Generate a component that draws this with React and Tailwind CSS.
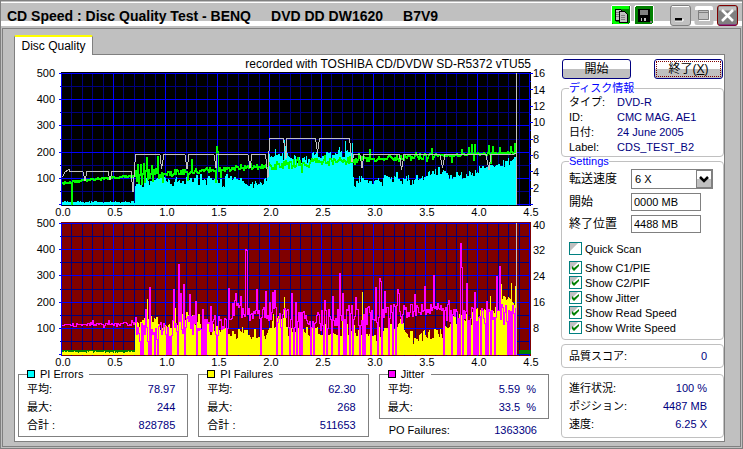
import { useId, useState } from 'react';

const PLOT_LEFT = 44;
const PLOT_TOP = 2;
const PLOT_W = 469;
const PLOT_H = 133;
const SCAN_COLS = 455;

const toX = (gb) => PLOT_LEFT + Math.round(gb * 104);
const toY = (value) => Math.round(134 - value * 0.262);

// small seeded generator so that the scan looks the same on every render
function makeRandom(seed) {
  let s = seed;
  return () => {
    s = (s * 1664525 + 1013904223) % 4294967296;
    return s / 4294967296;
  };
}

function levelAt(points, gb) {
  for (let i = 1; i < points.length; i++) {
    const [x0, y0] = points[i - 1];
    const [x1, y1] = points[i];
    if (gb <= x1) return y0 + ((gb - x0) / (x1 - x0)) * (y1 - y0);
  }
  return points[points.length - 1][1];
}

const pieLevels = [
  [0, 8], [0.699, 8], [0.7, 80], [0.8, 82], [0.95, 104], [1.03, 78], [1.12, 90], [1.3, 97],
  [1.5, 86], [1.65, 90], [1.8, 74], [1.97, 90], [1.98, 184], [2.08, 196], [2.25, 174], [2.4, 176],
  [2.5, 190], [2.65, 188], [2.79, 208], [2.8, 92], [2.87, 84], [3.2, 100], [3.35, 86], [3.45, 102],
  [3.6, 120], [3.75, 110], [3.95, 118], [4.05, 145], [4.15, 132], [4.25, 158], [4.37, 178],
];
const pieSpikes = [[2.05, 210], [2.13, 244], [2.14, 222], [2.65, 206], [2.72, 240], [2.79, 232], [2.66, 216]];

const pifLevels = [
  [0, 5], [0.699, 5], [0.7, 134], [0.76, 122], [0.82, 118], [0.88, 130], [1, 108], [1.1, 138],
  [1.2, 142], [1.3, 120], [1.4, 106], [1.5, 94], [1.6, 78], [1.7, 84], [1.8, 68], [1.95, 76],
  [2, 108], [2.08, 138], [2.15, 102], [2.25, 85], [2.4, 82], [2.5, 92], [2.7, 88], [2.85, 92],
  [3, 78], [3.15, 96], [3.25, 125], [3.3, 84], [3.4, 68], [3.5, 78], [3.65, 88], [3.75, 120],
  [3.83, 145], [3.9, 114], [4.05, 165], [4.1, 142], [4.2, 175], [4.25, 216], [4.3, 196], [4.37, 215],
];
const pifSpikes = [[0.82, 210], [1.09, 175], [1.22, 190], [2.13, 218], [2.88, 238], [4.12, 220], [4.22, 268], [4.32, 270], [4.36, 258]];

const jitterLevels = [
  [0, 112], [0.7, 117], [0.71, 80], [1, 95], [1.2, 115], [1.5, 110], [1.6, 140], [1.65, 175],
  [1.75, 150], [1.9, 155], [2, 165], [2.1, 140], [2.4, 120], [2.6, 140], [2.75, 160], [2.9, 140],
  [3.05, 160], [3.2, 150], [3.35, 168], [3.6, 174], [3.7, 155], [3.9, 145], [4.1, 155], [4.37, 150],
];
const jitterSpikes = [
  [0.8, 170], [0.84, 255], [1.07, 250], [1.115, 345], [1.13, 232], [1.165, 267], [1.22, 228],
  [1.28, 204], [1.35, 170], [1.42, 185], [1.6, 252], [1.66, 232], [1.71, 222], [1.76, 402], [1.77, 396],
  [1.87, 248], [1.95, 242], [2.02, 236], [2.04, 244], [2.2, 232], [2.24, 200], [2.52, 205],
  [2.6, 220], [2.66, 310], [2.69, 232], [2.82, 218], [3.01, 255], [3.045, 290], [3.055, 280],
  [3.1, 240], [3.22, 248], [3.23, 234], [3.38, 228], [3.48, 260], [3.57, 302], [3.71, 205],
  [3.83, 424], [3.84, 332], [3.88, 272], [3.96, 236], [4.17, 298], [4.2, 336], [4.08, 204],
];

const readLevels = [
  [0, 84], [0.25, 96], [0.7, 111], [1, 120], [1.5, 136], [2, 150], [2.5, 165], [2.8, 172],
  [3.2, 178], [3.6, 188], [4.37, 199],
];
const readSpikes = [
  [0.09, 4], [0.75, 152], [0.78, 158], [0.81, 180], [0.86, 150], [0.91, 182], [0.73, 84], [0.76, 80],
  [0.96, 88], [1.2, 96], [1.24, 170], [1.48, 222], [1.49, 204], [1.475, 88], [1.52, 108], [2.3, 126], [2.85, 195],
  [2.95, 210], [3.55, 214], [3.74, 166], [3.84, 210], [3.9, 218], [3.93, 229], [3.96, 230],
  [3.95, 170], [4.1, 225], [4.13, 222], [4.2, 218], [4.31, 222], [4.35, 232], [4.12, 162],
];

function applySpikes(values, spikes) {
  spikes.forEach(([gb, value]) => {
    values[Math.round(gb * 104)] = value;
  });
  return values;
}

function barPath(values) {
  return values.map((v, i) => `M${PLOT_LEFT + i} 135V${Math.min(toY(v), 134)}h1V135z`).join('');
}

// every column is one vertical run from the last value to this one
function tracePath(values, thickness) {
  return values
    .map((v, i) => {
      const a = toY(i ? values[i - 1] : v);
      const b = toY(v);
      return `M${PLOT_LEFT + i} ${Math.min(a, b)}h1v${Math.min(Math.abs(a - b) + thickness, 135 - Math.min(a, b))}h-1z`;
    })
    .join('');
}

function buildBars(levels, spikes, seed, noise) {
  const rnd = makeRandom(seed);
  let held = 0;
  const values = Array.from({ length: SCAN_COLS }, (_, i) => {
    const gb = i / 104;
    if (i % 2 === 0 || rnd() > 0.7) held = (rnd() + rnd() - 1) * noise;
    return gb < 0.7 ? 5 + rnd() * 6 : levelAt(levels, gb) + held;
  });
  return applySpikes(values, spikes);
}

function buildJitter() {
  const rnd = makeRandom(77);
  let down = false;
  const values = Array.from({ length: SCAN_COLS }, (_, i) => {
    const gb = i / 104;
    const base = levelAt(jitterLevels, gb);
    if (gb < 0.7) return base + (rnd() - 0.5) * (rnd() > 0.85 ? 30 : 12);
    const calm = (gb > 3.28 && gb < 3.66) || (gb > 1.74 && gb < 1.95);
    down = !down && rnd() < (calm ? 0.06 : 0.28);
    if (down) return 0;
    return base + (rnd() - 0.5) * (calm ? 48 : 76);
  });
  return applySpikes(values, jitterSpikes);
}

function buildRead() {
  const rnd = makeRandom(9);
  const values = Array.from({ length: SCAN_COLS }, (_, i) => {
    const gb = i / 104;
    let noise = 18;
    if (gb < 0.7) noise = 6;
    else if (gb < 0.95) noise = 50;
    else if (gb > 1.95 && gb < 2.8) noise = 30;
    else if (gb > 3.6) noise = 7;
    else if (gb > 2.8) noise = 22;
    if (gb > 0.7 && rnd() > 0.9) noise *= 1.8;
    return levelAt(readLevels, gb) + (rnd() - 0.5) * noise;
  });
  return applySpikes(values, readSpikes);
}

const pieBars = barPath(buildBars(pieLevels, pieSpikes, 21, 26));
const pifBars = barPath(buildBars(pifLevels, pifSpikes, 5, 38));
const jitterTrace = tracePath(buildJitter(), 1);
const readTrace = tracePath(buildRead(), 2);

const writePoints =
  '44.5,107 47,102 50,100 51,99 52,101.5 65,101.5 67,111 69,101.5 90,101.5 92,110 94,101.5 113,101.5 ' +
  '115,122 117.5,84.5 142,84.5 143.5,99 146,84.5 167,84.5 169,99 171,84.5 196,84.5 198,98 199,84.5 ' +
  '230,84.5 232,98 234,84.5 247.5,84.5 250,108 251.5,68.5 265.5,68.5 268,89 268.5,68.5 297.5,68.5 ' +
  '299.5,83 301.5,68.5 331.5,68.5 334,92 336,84.5 342,84.5 344,98 346,84.5 381.5,84.5 383.5,100 ' +
  '386,84.5 422,84.5 424.5,98 427,84.5 468,84.5 471,100 473,84.5 495,84.5 498,83';

const GB_STEPS = Array.from({ length: 46 }, (_, i) => i);
const LEVEL_STEPS = [0, 50, 100, 150, 200, 250, 300, 350, 400, 450, 500];

function Grid({ background }) {
  return (
    <>
      <rect x={PLOT_LEFT - 1} y={PLOT_TOP} width={PLOT_W + 1} height={PLOT_H + 1} fill={background} />
      {[false, true].map((major) => (
        <g key={String(major)} fill={major ? '#0000ff' : '#000080'}>
          {GB_STEPS.filter((i) => (i % 5 === 0) === major).map((i) => (
            <rect key={`x${i}`} x={toX(i / 10) - 1} y={PLOT_TOP + 1} width="1" height={PLOT_H} />
          ))}
          {LEVEL_STEPS.filter((v) => (v % 100 === 0) === major).map((v) => (
            <rect key={`y${v}`} x={major ? 41 : 42} y={toY(v)} width={major ? 470 : 469} height="1" />
          ))}
        </g>
      ))}
    </>
  );
}

function Chart({ label, background, rightAxis, rightTicks, children }) {
  return (
    <svg
      viewBox="0 0 531 150"
      role="img"
      aria-label={label}
      className="block w-full overflow-visible font-['Liberation_Sans',sans-serif] text-[11px]"
    >
      <g shapeRendering="crispEdges">
        <Grid background={background} />
        {rightTicks &&
          Array.from({ length: 17 }, (_, i) => (
            <rect key={i} x="511" y={Math.round(3 + i * 8.2)} width={i % 2 ? 2 : 4} height="1" fill="#0000ff" />
          ))}
      </g>
      {children}
      <rect x="498" y="3" width="1" height="132" fill="#c0c0c0" shapeRendering="crispEdges" />
      {[100, 200, 300, 400, 500].map((v) => (
        <text key={v} x="37" y={toY(v) + 4} textAnchor="end">
          {v}
        </text>
      ))}
      {rightAxis.map(([text, y]) => (
        <text key={text} x="515" y={y + 4}>
          {text}
        </text>
      ))}
      {[0, 0.5, 1, 1.5, 2, 2.5, 3, 3.5, 4, 4.5].map((gb) => (
        <text key={gb} x={toX(gb) + 1} y="146" textAnchor="middle">
          {gb.toFixed(1)}
        </text>
      ))}
    </svg>
  );
}

function StatBox({ color, title, rows, children }) {
  return (
    <div>
      <fieldset className="min-w-0 border border-[#808080] pr-3 pb-[2px] pl-2">
        <legend className="flex items-center gap-[5px] pr-1.5 leading-[12px]">
          <span className={`size-2 border border-black ${color}`} />
          {title}
        </legend>
        <Rows rows={rows} />
      </fieldset>
      {children}
    </div>
  );
}

function Rows({ rows }) {
  return (
    <dl>
      {rows.map(([name, value]) => (
        <div key={name} className="flex h-[18px] items-center justify-between">
          <dt>{name}</dt>
          <dd className="whitespace-pre text-[#000080]">{value}</dd>
        </div>
      ))}
    </dl>
  );
}

function Check({ label, defaultChecked }) {
  const [on, setOn] = useState(defaultChecked);
  return (
    <label className="flex h-[15px] items-center gap-[3px]">
      <span className="relative size-[13px]">
        <input
          type="checkbox"
          checked={on}
          onChange={(e) => setOn(e.target.checked)}
          className="block size-[13px] appearance-none border border-[#008080] bg-[linear-gradient(135deg,#c0c0c0_36%,#fff_37%)]"
        />
        {on && (
          <svg viewBox="0 0 13 13" className="pointer-events-none absolute inset-0" aria-hidden="true">
            <path d="M3 5v3l2 2 5-5V3L5 7z" fill="#008000" />
          </svg>
        )}
      </span>
      {label}
    </label>
  );
}

function PushButton({ children, focused }) {
  return (
    <button
      type="button"
      className="h-5 w-[69px] rounded-[3px] border border-[#000080] bg-[linear-gradient(#fff_50%,#c0c0c0_50%)] p-px text-[12px] leading-[14px]"
    >
      <span className={`block h-4 border border-dotted ${focused ? 'border-[#800000]' : 'border-transparent'}`}>
        {children}
      </span>
    </button>
  );
}

function TitleBar() {
  return (
    <header className="flex h-7 items-start justify-between bg-[linear-gradient(#808080_1px,#c0c0c0_1px,#c0c0c0_2px,#fff_2px,#fff_3px,#c0c0c0_3px,#c0c0c0_21px,#fff_21px,#fff_26px,#c0c0c0_26px)] pr-1 pl-[6px]">
      <h1 className="flex gap-5 pt-2 text-[14px] leading-4 font-bold whitespace-nowrap">
        <span>CD Speed : Disc Quality Test - BENQ</span>
        <span>DVD DD DW1620</span>
        <span>B7V9</span>
      </h1>
      <div className="flex gap-[3px] pt-[5px]">
        <button type="button" aria-label="Copy" className="size-5">
          <svg viewBox="0 0 20 20" className="size-5" shapeRendering="crispEdges">
            <rect width="20" height="20" rx="3" fill="#fff" />
            <rect x="1" y="1" width="18" height="18" rx="2" fill="#008000" />
            <path d="M1 1h17v3H8v6H5v7h12v2H2l-1-2z" fill="#00ff00" />
            <path d="M4 4h5l2 2v9H4z" fill="#c0c0c0" stroke="#000" />
            <path d="M8 6h5l3 3v8H8z" fill="#c0c0c0" stroke="#000" />
            <path d="M5 7h3M5 9h3M5 11h3M10 10h4M10 12h4M10 14h4" stroke="#808080" />
          </svg>
        </button>
        <button type="button" aria-label="Save" className="mr-[13px] size-5">
          <svg viewBox="0 0 20 20" className="size-5" shapeRendering="crispEdges">
            <rect width="20" height="20" rx="3" fill="#fff" />
            <rect x="1" y="1" width="18" height="18" rx="2" fill="#008000" />
            <path d="M4 4h12v13H4z" fill="#000" />
            <path d="M6 5h8v5H6z" fill="#808080" />
            <path d="M7 13h5v3H7z" fill="#c0c0c0" />
            <path d="M8 13h2v3H8z" fill="#000" />
            <path d="M16 16h2v2h-2z" fill="#808080" />
          </svg>
        </button>
        <button type="button" aria-label="Minimize" className="size-[21px]">
          <svg viewBox="0 0 21 21" className="size-[21px]">
            <rect x=".5" y=".5" width="20" height="20" rx="2.5" fill="#c0c0c0" stroke="#808080" />
            <path d="M2 1.5h17" stroke="#fff" />
            <path d="M5 13h7v3H5z" fill="#000" />
            <path d="M5 16h8v-2" fill="none" stroke="#fff" />
          </svg>
        </button>
        <button type="button" aria-label="Maximize" className="size-5" disabled>
          <svg viewBox="0 0 20 20" className="size-5">
            <rect x=".5" y="1" width="19" height="19" rx="2.5" fill="#c0c0c0" />
            <path d="M1 5V3q0-2 2-2h14q2 0 2 2v2z" fill="#fff" />
            <path d="M5 5h11v11H5z" fill="#fff" />
            <path d="M4.5 5.5h10v9h-10zM4 7.5h11" fill="#c0c0c0" stroke="#808080" />
          </svg>
        </button>
        <button type="button" aria-label="Close" className="size-[21px]">
          <svg viewBox="0 0 21 21" className="size-[21px]">
            <rect x=".5" y=".5" width="20" height="20" rx="2.5" fill="#808080" stroke="#800000" />
            <path d="M2 1.5h17v4H2z" fill="#c0c0c0" />
            <path d="M2 20h17" stroke="#800080" />
            <path d="M5 5l11 11M16 5L5 16" stroke="#fff" strokeWidth="2.5" />
          </svg>
        </button>
      </div>
    </header>
  );
}

const discInfo = [
  ['タイプ:', 'DVD-R'],
  ['ID:', 'CMC MAG. AE1'],
  ['日付:', '24 June 2005'],
  ['Label:', 'CDS_TEST_B2'],
];

function Sidebar() {
  const id = useId();
  const group = 'min-w-0 rounded-[4px] border border-[#c0c0c0] pl-[7px]';
  return (
    <aside className="w-[163px] shrink-0 pt-1">
      <div className="flex justify-between px-px">
        <PushButton>開始</PushButton>
        <PushButton focused>
          終了(<u>X</u>)
        </PushButton>
      </div>

      <fieldset className={`mt-[3px] pb-[2px] ${group}`}>
        <legend className="leading-[12px] text-[#0000ff]">ディスク情報</legend>
        <dl>
          {discInfo.map(([name, value]) => (
            <div key={name} className="flex h-[15px] items-center">
              <dt className="w-12">{name}</dt>
              <dd className="text-[#000080]">{value}</dd>
            </div>
          ))}
        </dl>
      </fieldset>

      <fieldset className={`-mt-[2px] pb-1 ${group}`}>
        <legend className="leading-[12px] text-[#0000ff]">Settings</legend>
        <div className="grid grid-cols-[62px_1fr] items-center gap-y-1 pt-[2px] text-[12px]">
          <label htmlFor={`${id}speed`}>転送速度</label>
          <div className="relative w-[82px]">
            <select
              id={`${id}speed`}
              className="block h-5 w-full appearance-none border border-[#808080] bg-white pl-[3px] text-[11px]"
            >
              <option>6 X</option>
            </select>
            <svg viewBox="0 0 16 18" className="pointer-events-none absolute top-px right-px h-[18px] w-4" aria-hidden="true">
              <rect x=".5" y=".5" width="15" height="17" fill="#fff" stroke="#808080" />
              <path d="M1 9h14v8H1z" fill="#c0c0c0" />
              <path d="M4 7l4 4 4-4" fill="none" stroke="#000" strokeWidth="2.5" />
            </svg>
          </div>
          <label htmlFor={`${id}start`}>開始</label>
          <input
            id={`${id}start`}
            defaultValue="0000 MB"
            className="h-[18px] w-[70px] border border-[#808080] pl-[2px] text-[11px]"
          />
          <label htmlFor={`${id}end`}>終了位置</label>
          <input
            id={`${id}end`}
            defaultValue="4488 MB"
            className="h-[18px] w-[70px] border border-[#808080] pl-[2px] text-[11px]"
          />
        </div>
        <div className="pt-2">
          <Check label="Quick Scan" defaultChecked={false} />
        </div>
        <div className="pt-1">
          <Check label="Show C1/PIE" defaultChecked />
          <Check label="Show C2/PIF" defaultChecked />
          <Check label="Show Jitter" defaultChecked />
          <Check label="Show Read Speed" defaultChecked />
          <Check label="Show Write Speed" defaultChecked />
        </div>
      </fieldset>

      <div className={`mt-1 py-[2px] pr-4 ${group}`}>
        <Rows rows={[['品質スコア:', '0']]} />
      </div>
      <div className={`mt-[6px] py-1 pr-4 ${group}`}>
        <Rows
          rows={[
            ['進行状況:', '100 %'],
            ['ポジション:', '4487 MB'],
            ['速度:', '6.25 X'],
          ]}
        />
      </div>
    </aside>
  );
}

export default function App() {
  return (
    <div className="flex min-h-screen flex-col border-x border-b border-[#808080] bg-[#c0c0c0] font-['Liberation_Sans','Noto_Sans_CJK_JP',sans-serif] text-[11px] leading-[14px] text-black">
      <TitleBar />
      <div className="mx-px mb-px flex flex-1 flex-col border border-[#808080] pt-[6px] pr-[15px] pb-1 pl-[11px]">
        <div role="tablist">
          <button
            type="button"
            role="tab"
            aria-selected="true"
            className="relative -mb-px block h-5 w-[79px] rounded-t-[2px] border-x border-t-2 border-x-[#808080] border-t-[#ffff00] bg-white text-[12px]"
          >
            Disc Quality
          </button>
        </div>
        <main className="flex flex-1 border border-[#808080] bg-white pl-[3px]">
          <div className="mr-3 min-w-0 flex-1">
            <p className="h-[15px] pt-[2px] pr-[18px] text-right text-[12px]">
              recorded with TOSHIBA CD/DVDW SD-R5372 vTU55
            </p>
            <Chart
              label="PI Errors, read speed and write speed"
              background="#000000"
              rightTicks
              rightAxis={[
                ['16', 3], ['14', 20], ['12', 36], ['10', 52], ['8', 69], ['6', 85], ['4', 102], ['2', 118],
              ]}
            >
              <g shapeRendering="crispEdges">
                <path d={pieBars} fill="#00ffff" />
                <path d={readTrace} fill="#00ff00" />
                <polyline points={writePoints} fill="none" stroke="#c0c0c0" />
              </g>
            </Chart>
            <Chart
              label="PI Failures and jitter"
              background="#800000"
              rightAxis={[['40', 5], ['32', 30], ['24', 56], ['16', 82], ['8', 108]]}
            >
              <g shapeRendering="crispEdges">
                <rect x="44" y="130" width="73" height="4" fill="#008000" />
                <rect x="501" y="130" width="12" height="4" fill="#008000" />
                <path d={pifBars} fill="#ffff00" />
                <path d={jitterTrace} fill="#ff00ff" />
              </g>
            </Chart>
            <div className="-mt-[2px] grid grid-cols-3 gap-[10px]">
              <StatBox
                color="bg-[#00ffff]"
                title="PI Errors"
                rows={[['平均:', '78.97'], ['最大:', '244'], ['合計 :', '828785']]}
              />
              <StatBox
                color="bg-[#ffff00]"
                title="PI Failures"
                rows={[['平均:', '62.30'], ['最大:', '268'], ['合計 :', '511653']]}
              />
              <StatBox
                color="bg-[#ff00ff]"
                title="Jitter"
                rows={[['平均:', '5.59  %'], ['最大:', '33.5  %']]}
              >
                <div className="flex h-[18px] items-center justify-between pt-1 pr-3 pl-[10px]">
                  <span>PO Failures:</span>
                  <span className="text-[#000080]">1363306</span>
                </div>
              </StatBox>
            </div>
          </div>
          <Sidebar />
        </main>
      </div>
    </div>
  );
}
